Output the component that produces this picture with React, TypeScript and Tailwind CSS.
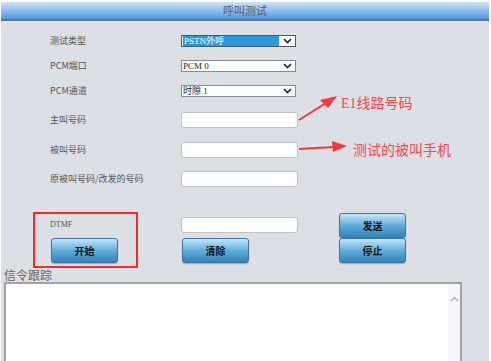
import React from "react";

const cjk = { fontFamily: '"Noto Sans CJK SC", "Noto Sans", sans-serif' };
const serifCjk = { fontFamily: '"Liberation Serif", "Noto Sans CJK SC", serif' };

function Chevron() {
  return (
    <svg width="9" height="6" viewBox="0 0 9 6" className="shrink-0">
      <path d="M1 1 L4.5 4.5 L8 1" fill="none" stroke="#222" strokeWidth="1.6" />
    </svg>
  );
}

function Select({ value, active }: { value: string; active?: boolean }) {
  return (
    <div
      className={`flex items-center w-[115px] h-[12px] bg-white border ${
        active ? "border-[#555]" : "border-[#8a8a8a]"
      }`}
    >
      <div
        className={`flex items-center flex-1 pl-[1px] text-[9px] leading-[10px] overflow-visible whitespace-nowrap ${
          active ? "bg-[#2a9ae0] text-white ml-[1px] h-[10px]" : "h-full text-[#222]"
        }`}
        style={serifCjk}
      >
        {value}
      </div>
      <div className="w-[16px] flex items-center justify-center">
        <Chevron />
      </div>
    </div>
  );
}

function Input() {
  return <div className="w-[117px] h-[16px] bg-white border border-[#c2c2c2] rounded-[3px]" />;
}

function Btn({ label }: { label: string }) {
  return (
    <button
      className="w-[67px] h-[25px] rounded-[3px] border border-[#3b77a0] bg-gradient-to-b from-[#c3e6f7] via-[#5eaed9] to-[#3582b9] text-[10px] font-semibold text-[#111] flex items-center justify-center shadow-[0_1px_1px_rgba(0,0,0,0.25)]"
      style={cjk}
    >
      {label}
    </button>
  );
}

function Row({
  label,
  children,
  className,
}: {
  label: string;
  children: React.ReactNode;
  className: string;
}) {
  return (
    <div className={`flex items-center h-[24px] ${className}`}>
      <div className="w-[180px] shrink-0 pl-[49px] text-[9px] text-[#555] whitespace-nowrap" style={cjk}>
        {label}
      </div>
      {children}
    </div>
  );
}

export default function App() {
  return (
    <div className="relative w-[491px] h-[361px] bg-white overflow-hidden" style={cjk}>
      <div className="ml-[1px] mt-[2px] w-[488px] h-[359px] bg-[#dcdfe4] flex flex-col">
        <div className="h-[17px] bg-gradient-to-b from-[#cfe3f7] to-[#4a97e6] flex items-center justify-center text-[11px] text-[#5d5d5d]">
          呼叫测试
        </div>
        <div className="h-[2px] bg-[#727272]" />

        <Row label="测试类型" className="mt-[8px]">
          <Select value="PSTN外呼" active />
        </Row>
        <Row label="PCM端口" className="mt-[1px]">
          <Select value="PCM 0" />
        </Row>
        <Row label="PCM通道" className="mt-[1px]">
          <Select value="时隙 1" />
        </Row>
        <Row label="主叫号码" className="mt-[5px]">
          <Input />
        </Row>
        <Row label="被叫号码" className="mt-[6px]">
          <Input />
        </Row>
        <Row label="原被叫号码/改发的号码" className="mt-[5px]">
          <Input />
        </Row>

        <div className="flex items-center h-[24px] mt-[22px]">
          <div className="w-[180px] shrink-0 pl-[49px] text-[8px] text-[#555]" style={serifCjk}>
            DTMF
          </div>
          <div className="w-[158px] shrink-0">
            <Input />
          </div>
          <Btn label="发送" />
        </div>
        <div className="flex items-center h-[25px] mt-[1px]">
          <div className="w-[180px] shrink-0 pl-[50px]">
            <Btn label="开始" />
          </div>
          <div className="w-[158px] shrink-0 pl-[1px]">
            <Btn label="清除" />
          </div>
          <Btn label="停止" />
        </div>

        <div className="mt-[4px] ml-[3px] h-[15px] text-[12px] leading-[15px] text-[#666]">
          信令跟踪
        </div>
        <div className="ml-[3px] w-[458px] flex-1 bg-white border-2 border-[#a3a3a3] border-b-0 flex justify-end">
          <div className="w-[12px] bg-[#f6f6f6] flex justify-center pt-[12px]">
            <svg width="9" height="6" viewBox="0 0 9 6">
              <path d="M1 5 L4.5 1.5 L8 5" fill="none" stroke="#b5b5b5" strokeWidth="1.5" />
            </svg>
          </div>
        </div>
      </div>

      {/* annotations */}
      <div className="absolute left-[33px] top-[212px] w-[105px] h-[56px] border-2 border-[#f52b2b]" />
      <svg className="absolute left-0 top-0" width="491" height="361" viewBox="0 0 491 361">
        <line x1="299" y1="120" x2="326" y2="103" stroke="#f03b3b" strokeWidth="2" />
        <polygon points="337,96 320,100 328,108" fill="#f03b3b" />
        <line x1="299" y1="149" x2="334" y2="147" stroke="#f03b3b" strokeWidth="2" />
        <polygon points="347,146 332,141 333,152" fill="#f03b3b" />
      </svg>
      <div
        className="absolute left-[341px] top-[95px] text-[14px] leading-[18px] text-[#f04a4a] whitespace-nowrap"
        style={serifCjk}
      >
        E1线路号码
      </div>
      <div
        className="absolute left-[353px] top-[140px] text-[14px] leading-[18px] text-[#f04a4a] whitespace-nowrap"
        style={cjk}
      >
        测试的被叫手机
      </div>
    </div>
  );
}
